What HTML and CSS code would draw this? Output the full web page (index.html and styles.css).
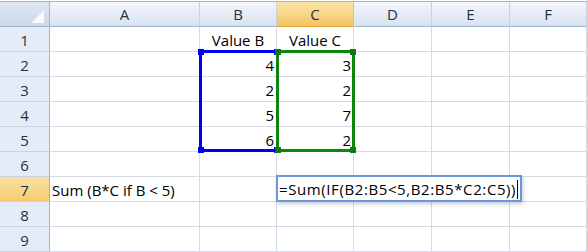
FILE: index.html
```html
<!DOCTYPE html>
<html>
<head>
<meta charset="utf-8">
<link rel="stylesheet" href="styles.css">
</head>
<body>
<div class="sheet">
  <div class="grid">
    <div class="corner"><svg width="49" height="24" viewBox="0 0 49 24"><polygon points="44,8 44,21 31,21" fill="#ffffff" opacity="0.85"/></svg></div>
    <div class="ch">A</div>
    <div class="ch">B</div>
    <div class="ch sel">C</div>
    <div class="ch">D</div>
    <div class="ch">E</div>
    <div class="ch">F</div>

    <div class="rh">1</div><div class="c"></div><div class="c ctr">Value B</div><div class="c ctr">Value C</div><div class="c"></div><div class="c"></div><div class="c"></div>
    <div class="rh">2</div><div class="c"></div><div class="c num">4</div><div class="c num">3</div><div class="c"></div><div class="c"></div><div class="c"></div>
    <div class="rh">3</div><div class="c"></div><div class="c num">2</div><div class="c num">2</div><div class="c"></div><div class="c"></div><div class="c"></div>
    <div class="rh">4</div><div class="c"></div><div class="c num">5</div><div class="c num">7</div><div class="c"></div><div class="c"></div><div class="c"></div>
    <div class="rh">5</div><div class="c"></div><div class="c num">6</div><div class="c num">2</div><div class="c"></div><div class="c"></div><div class="c"></div>
    <div class="rh">6</div><div class="c"></div><div class="c"></div><div class="c"></div><div class="c"></div><div class="c"></div><div class="c"></div>
    <div class="rh sel">7</div><div class="c txt">Sum (B*C if B &lt; 5)</div><div class="c"></div><div class="c"></div><div class="c"></div><div class="c"></div><div class="c"></div>
    <div class="rh">8</div><div class="c"></div><div class="c"></div><div class="c"></div><div class="c"></div><div class="c"></div><div class="c"></div>
    <div class="rh">9</div><div class="c"></div><div class="c"></div><div class="c"></div><div class="c"></div><div class="c"></div><div class="c"></div>
  </div>

  <div class="range range-b"><i class="h tl"></i><i class="h tr"></i><i class="h bl"></i><i class="h br"></i></div>
  <div class="range range-c"><i class="h tl"></i><i class="h tr"></i><i class="h bl"></i><i class="h br"></i></div>

  <div class="editor"><span class="formula">=Sum(IF(B2:B5&lt;5,B2:B5*C2:C5))</span><span class="caret"></span></div>
</div>
</body>
</html>
```

FILE: styles.css
```css
html, body {
  margin: 0;
  padding: 0;
  background: #ffffff;
}

.sheet {
  position: relative;
  width: 587px;
  height: 252px;
  overflow: hidden;
  padding-top: 1px;
  box-sizing: border-box;
  font-family: "Open Sans", "Noto Sans", sans-serif;
  font-size: 15px;
  color: #000000;
}

.grid {
  display: grid;
  grid-template-columns: 50px 150px 77px 77px 78px 78px 77px;
  grid-template-rows: 25px repeat(9, 25px);
  border-top: 1px solid #9eb6ce;
}

.corner {
  background: linear-gradient(#dfe8f4, #cbd8e9);
  border-right: 1px solid #9eb6ce;
  border-bottom: 1px solid #9eb6ce;
  box-sizing: border-box;
  line-height: 0;
}

.ch {
  background: linear-gradient(#f3f6fb 0%, #e6edf6 45%, #d9e3ef 100%);
  border-right: 1px solid #c5d3e3;
  border-bottom: 1px solid #9eb6ce;
  box-sizing: border-box;
  display: flex;
  align-items: center;
  justify-content: center;
  color: #1f2f45;
}

.ch.sel {
  background: linear-gradient(#fbe3a6 0%, #f8d98c 45%, #f1c25f 100%);
  border-bottom-color: #e8a43a;
  border-right-color: #e8c27a;
}

.rh {
  background: #e4ecf7;
  border-right: 1px solid #9eb6ce;
  border-bottom: 1px solid #c5d3e3;
  box-sizing: border-box;
  display: flex;
  align-items: center;
  justify-content: center;
  color: #1f2f45;
  padding-top: 1px;
}

.rh.sel {
  background: linear-gradient(#fbe0a0, #f5cc72);
  border-right-color: #e8a43a;
}

.c {
  border-right: 1px solid #d4dbe6;
  border-bottom: 1px solid #d4dbe6;
  box-sizing: border-box;
  display: flex;
  align-items: center;
  white-space: nowrap;
  overflow: visible;
  padding-top: 2px;
}

.ctr {
  justify-content: center;
}

.num {
  justify-content: flex-end;
  padding-right: 2px;
}

.txt {
  padding-left: 2px;
}

.range {
  position: absolute;
  box-sizing: border-box;
  border: 3px solid;
}

.range-b {
  left: 199px;
  top: 50px;
  width: 80px;
  height: 102px;
  border-color: #0000ee;
}

.range-c {
  left: 276px;
  top: 50px;
  width: 79px;
  height: 102px;
  border-color: #0e850e;
}

.h {
  position: absolute;
  width: 6px;
  height: 6px;
}

.range-b .h { background: #0000ee; }
.range-c .h { background: #0e7a0e; }

.tl { left: -4px; top: -4px; }
.tr { right: -4px; top: -4px; }
.bl { left: -4px; bottom: -4px; }
.br { right: -4px; bottom: -4px; }

.editor {
  position: absolute;
  left: 276px;
  top: 175px;
  width: 246px;
  height: 27px;
  box-sizing: border-box;
  border: 2px solid #6b98d8;
  background: #ffffff;
  box-shadow: 1px 2px 4px rgba(90, 110, 140, 0.35);
  display: flex;
  align-items: center;
  padding-left: 1px;
  padding-top: 1px;
  white-space: nowrap;
}

.formula {
  letter-spacing: 0.6px;
}

.caret {
  display: inline-block;
  width: 1px;
  height: 19px;
  background: #000000;
  margin-left: 1px;
}
```
